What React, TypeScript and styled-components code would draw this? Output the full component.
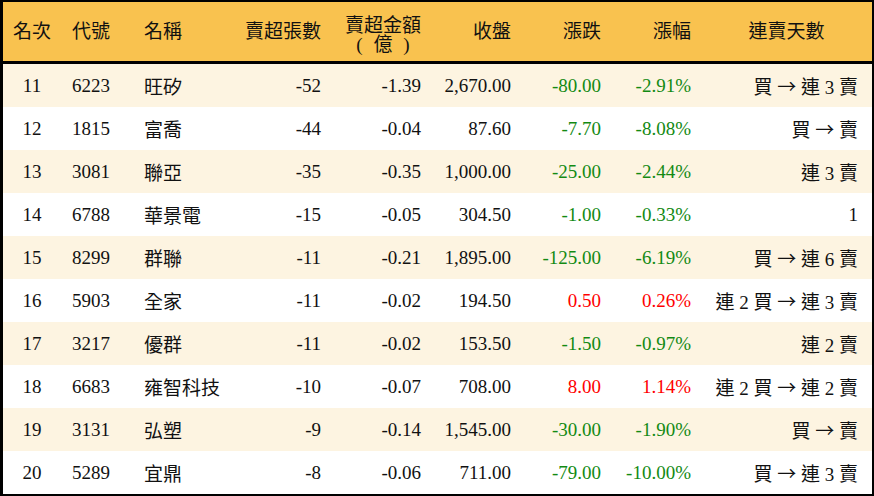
import React from 'react'
import styled, { createGlobalStyle } from 'styled-components'

type Move = 'up' | 'down'

interface Stock {
  rank: number
  code: string
  name: string
  lots: string
  amount: string
  close: string
  change: string
  pct: string
  move: Move
  streak: string
}

const rows: Stock[] = [
  { rank: 11, code: '6223', name: '旺矽', lots: '-52', amount: '-1.39', close: '2,670.00', change: '-80.00', pct: '-2.91%', move: 'down', streak: '買 → 連 3 賣' },
  { rank: 12, code: '1815', name: '富喬', lots: '-44', amount: '-0.04', close: '87.60', change: '-7.70', pct: '-8.08%', move: 'down', streak: '買 → 賣' },
  { rank: 13, code: '3081', name: '聯亞', lots: '-35', amount: '-0.35', close: '1,000.00', change: '-25.00', pct: '-2.44%', move: 'down', streak: '連 3 賣' },
  { rank: 14, code: '6788', name: '華景電', lots: '-15', amount: '-0.05', close: '304.50', change: '-1.00', pct: '-0.33%', move: 'down', streak: '1' },
  { rank: 15, code: '8299', name: '群聯', lots: '-11', amount: '-0.21', close: '1,895.00', change: '-125.00', pct: '-6.19%', move: 'down', streak: '買 → 連 6 賣' },
  { rank: 16, code: '5903', name: '全家', lots: '-11', amount: '-0.02', close: '194.50', change: '0.50', pct: '0.26%', move: 'up', streak: '連 2 買 → 連 3 賣' },
  { rank: 17, code: '3217', name: '優群', lots: '-11', amount: '-0.02', close: '153.50', change: '-1.50', pct: '-0.97%', move: 'down', streak: '連 2 賣' },
  { rank: 18, code: '6683', name: '雍智科技', lots: '-10', amount: '-0.07', close: '708.00', change: '8.00', pct: '1.14%', move: 'up', streak: '連 2 買 → 連 2 賣' },
  { rank: 19, code: '3131', name: '弘塑', lots: '-9', amount: '-0.14', close: '1,545.00', change: '-30.00', pct: '-1.90%', move: 'down', streak: '買 → 賣' },
  { rank: 20, code: '5289', name: '宜鼎', lots: '-8', amount: '-0.06', close: '711.00', change: '-79.00', pct: '-10.00%', move: 'down', streak: '買 → 連 3 賣' },
]

// the arrow is drawn in the CJK font so it gets its full-width shape
function Streak({ text }: { text: string }) {
  const parts = text.split('→')
  return (
    <StreakCell>
      {parts.map((p, i) => (
        <React.Fragment key={i}>
          {i > 0 && <Arrow>→</Arrow>}
          {p}
        </React.Fragment>
      ))}
    </StreakCell>
  )
}

export default function App() {
  return (
    <>
      <GlobalStyle />
      <Frame>
        <HeadRow>
          <HeadCell $align="center">名次</HeadCell>
          <HeadCell $align="left">代號</HeadCell>
          <HeadCell $align="left">名稱</HeadCell>
          <HeadCell $align="right">賣超張數</HeadCell>
          <HeadCell $align="right">
            <Stack>
              賣超金額
              <br />
              <Paren>(</Paren>億<Paren>)</Paren>
            </Stack>
          </HeadCell>
          <HeadCell $align="right">收盤</HeadCell>
          <HeadCell $align="right">漲跌</HeadCell>
          <HeadCell $align="right">漲幅</HeadCell>
          <HeadCell $align="center">連賣天數</HeadCell>
        </HeadRow>

        {rows.map((r, i) => (
          <Row key={r.code} $striped={i % 2 === 0}>
            <Cell $align="center">{r.rank}</Cell>
            <Cell $align="left">{r.code}</Cell>
            <Cell $align="left">{r.name}</Cell>
            <Cell $align="right">{r.lots}</Cell>
            <Cell $align="right">{r.amount}</Cell>
            <Cell $align="right">{r.close}</Cell>
            <Cell $align="right" $tone={r.move}>{r.change}</Cell>
            <Cell $align="right" $tone={r.move}>{r.pct}</Cell>
            <Streak text={r.streak} />
          </Row>
        ))}
      </Frame>
    </>
  )
}

const GlobalStyle = createGlobalStyle`
  html, body {
    margin: 0;
    padding: 0;
    background: #fff;
  }
  body {
    font-family: 'Liberation Serif', 'Noto Sans CJK TC', serif;
    color: #111;
  }
`

const columns = '58px 72px 98px 100px 100px 90px 90px 90px 1fr'

const Frame = styled.div`
  box-sizing: border-box;
  width: 874px;
  height: 496px;
  border: 2px solid #000;
  border-left-width: 3px;
  display: flex;
  flex-direction: column;
  background: #fff;
`

const HeadRow = styled.div`
  box-sizing: border-box;
  display: grid;
  grid-template-columns: ${columns};
  height: 62px;
  background: #f9c24f;
  border-bottom: 3px solid #000;
`

const HeadCell = styled.div<{ $align: 'left' | 'right' | 'center' }>`
  display: flex;
  align-items: center;
  justify-content: ${({ $align }) =>
    $align === 'left' ? 'flex-start' : $align === 'right' ? 'flex-end' : 'center'};
  padding: 0 10px 0 ${({ $align }) => ($align === 'left' ? '11px' : '10px')};
  font-size: 19px;
  line-height: 19px;
  color: #111;
  white-space: nowrap;
`

const Stack = styled.span`
  display: inline-block;
  text-align: center;
  padding-top: 6px;
`

const Paren = styled.span`
  display: inline-block;
  width: 28px;
  text-align: center;
  font-family: 'Liberation Serif', serif;
`

const Row = styled.div<{ $striped: boolean }>`
  display: grid;
  grid-template-columns: ${columns};
  height: 43px;
  background: ${({ $striped }) => ($striped ? '#fdf4e1' : '#fff')};
`

const Cell = styled.div<{ $align: 'left' | 'right' | 'center'; $tone?: Move }>`
  display: flex;
  align-items: center;
  justify-content: ${({ $align }) =>
    $align === 'left' ? 'flex-start' : $align === 'right' ? 'flex-end' : 'center'};
  padding: 0 10px 0 ${({ $align }) => ($align === 'left' ? '11px' : '10px')};
  font-size: 19px;
  white-space: nowrap;
  color: ${({ $tone }) => ($tone === 'up' ? '#ff0000' : $tone === 'down' ? '#138a13' : '#111')};
`

const StreakCell = styled.div`
  display: flex;
  align-items: center;
  justify-content: flex-end;
  padding-right: 14px;
  font-size: 19px;
  white-space: pre;
  color: #111;
`

const Arrow = styled.span`
  font-family: 'Noto Sans CJK TC', sans-serif;
  font-size: 19px;
`
